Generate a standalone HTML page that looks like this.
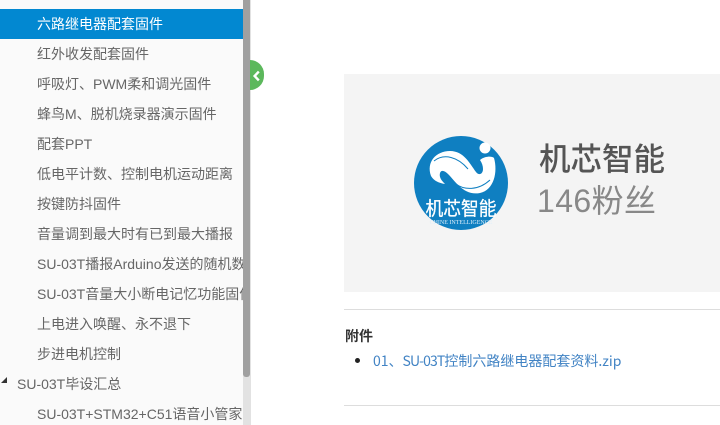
<!DOCTYPE html>
<html lang="zh">
<head>
<meta charset="utf-8">
<style>
html,body{margin:0;padding:0;background:#fff;}
body{width:720px;height:425px;overflow:hidden;position:relative;font-family:"Liberation Sans","Noto Sans CJK SC",sans-serif;}
#side{position:absolute;left:0;top:0;width:243px;height:425px;background:#fafafa;overflow:hidden;}
.it{position:absolute;left:0;width:243px;height:30px;line-height:30px;font-size:14px;color:#666;padding-left:37px;box-sizing:border-box;white-space:nowrap;overflow:hidden;}
.it.a{background:#0288d1;color:#fff;}
.it.p{padding-left:17px;}
#track{position:absolute;left:243px;top:0;width:8px;height:425px;background:#e2e2e2;}
#thumb{position:absolute;left:243px;top:0;width:7px;height:377px;background:#a0a0a0;border-radius:0 0 3px 3px;}
#tog{position:absolute;left:250px;top:60px;width:14px;height:30px;background:#5cb85c;border-radius:0 15px 15px 0;}
#tri{position:absolute;left:1px;top:377px;width:0;height:0;border-style:solid;border-width:0 0 6px 6px;border-color:transparent transparent #333 transparent;}
#box{position:absolute;left:344px;top:74px;width:376px;height:218px;background:#f4f4f4;}
#t1{position:absolute;left:539px;top:136px;font-size:31.5px;line-height:42px;color:#555;font-weight:500;font-family:"Noto Sans CJK SC",sans-serif;white-space:nowrap;}
#t2{position:absolute;left:537px;top:180px;font-size:32px;line-height:42px;color:#888;letter-spacing:.4px;font-family:"Liberation Sans","Noto Sans CJK SC",sans-serif;white-space:nowrap;}
.hr{position:absolute;left:344px;width:376px;height:1px;background:#ddd;}
#att{position:absolute;left:345px;top:326px;font-size:14px;line-height:20px;font-weight:bold;color:#333;}
#dot{position:absolute;left:355px;top:358px;width:5px;height:5px;border-radius:50%;background:#222;}
#lnk{position:absolute;left:373px;top:351px;font-size:14px;line-height:20px;color:#4183c4;white-space:nowrap;font-family:"Noto Sans CJK SC",sans-serif;}
#lnk span{letter-spacing:-.9px;}
</style>
</head>
<body>
<div id="side">
<div class="it a" style="top:9px">六路继电器配套固件</div>
<div class="it" style="top:39px">红外收发配套固件</div>
<div class="it" style="top:69px">呼吸灯、PWM柔和调光固件</div>
<div class="it" style="top:99px">蜂鸟M、脱机烧录器演示固件</div>
<div class="it" style="top:129px">配套PPT</div>
<div class="it" style="top:159px">低电平计数、控制电机运动距离</div>
<div class="it" style="top:189px">按键防抖固件</div>
<div class="it" style="top:219px">音量调到最大时有已到最大播报</div>
<div class="it" style="top:249px">SU-03T播报Arduino发送的随机数</div>
<div class="it" style="top:279px">SU-03T音量大小断电记忆功能固件</div>
<div class="it" style="top:309px">上电进入唤醒、永不退下</div>
<div class="it" style="top:339px">步进电机控制</div>
<div class="it p" style="top:369px">SU-03T毕设汇总</div>
<div class="it" style="top:399px">SU-03T+STM32+C51语音小管家</div>
<div id="tri"></div>
</div>
<div id="track"></div>
<div id="thumb"></div>
<div id="tog"></div>
<svg style="position:absolute;left:250px;top:69px" width="14" height="14" viewBox="0 0 14 14"><path d="M8.8 2.6L4.6 7l4.2 4.4" fill="none" stroke="#fff" stroke-width="2.4"/></svg>

<div id="box"></div>
<svg style="position:absolute;left:414px;top:136px" width="94" height="94" viewBox="0 0 94 94">
<circle cx="47" cy="47" r="47" fill="#0f7fc1"/>
<path d="M17 40C12 26 22 15 36 15C50 15 56 28 62 36C65 40 69 38 69 33C69 30 68 27 66 24C71 20 78 20 80 22C84 36 80 54 66 57C50 60 42 46 34 38C30 34 27 34 26 37C25 41 27 44 31 48C25 47 20 45 17 40Z" fill="#fff"/>
<path d="M20 25C30 17 44 21 54 33M42 48C50 54 64 55 76 44" fill="none" stroke="#0f7fc1" stroke-width="1"/>
<circle cx="71" cy="12" r="5.5" fill="#fff"/>
<text x="47" y="79" text-anchor="middle" font-size="19" fill="#fff" stroke="#fff" stroke-width=".3" font-family="'Noto Sans CJK SC',sans-serif" textLength="71" lengthAdjust="spacingAndGlyphs">机芯智能</text>
<text x="47" y="88" text-anchor="middle" font-size="6" fill="#dceefa" font-family="'Liberation Serif',serif">CHINE INTELLIGENCE</text>
</svg>
<div id="t1">机芯智能</div>
<div id="t2">146粉丝</div>

<div class="hr" style="top:309px"></div>
<div id="att">附件</div>
<div id="dot"></div>
<div id="lnk">01、<span>SU-03T</span>控制六路继电器配套资料.zip</div>
<div class="hr" style="top:405px"></div>
</body>
</html>
